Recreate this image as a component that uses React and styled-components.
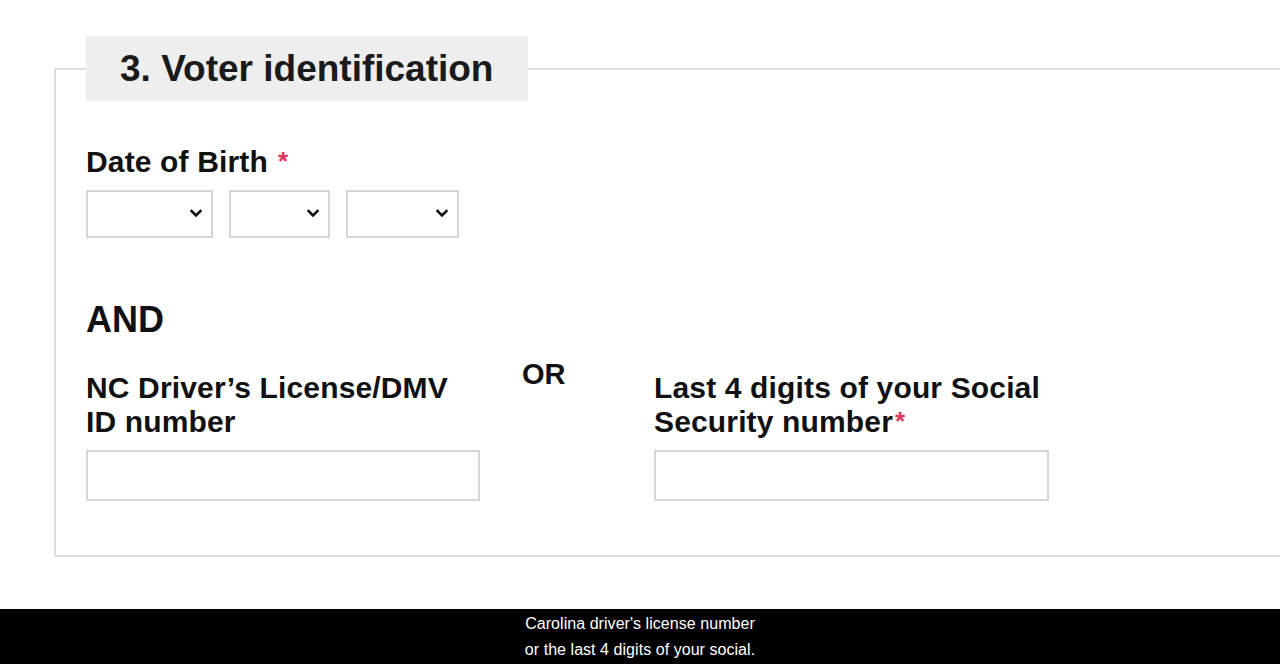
import React from 'react';
import styled, { createGlobalStyle } from 'styled-components';

const GlobalStyle = createGlobalStyle`
  html, body {
    margin: 0;
    padding: 0;
    background: #fff;
    overflow: hidden;
  }
  body {
    font-family: 'Liberation Sans', Arial, sans-serif;
    color: #111;
  }
`

const Page = styled.div`
  display: flex;
  flex-direction: column;
  width: 1280px;
  height: 664px;
  overflow: hidden;
`

const Content = styled.div`
  flex: 1;
  padding: 36px 0 0 54px;
`

const Fieldset = styled.fieldset`
  margin: 0;
  width: 1300px;
  box-sizing: border-box;
  border: 2px solid #dedede;
  border-right: none;
  padding: 44px 0 54px 30px;
  min-width: 0;
`

const Legend = styled.legend`
  box-sizing: border-box;
  height: 65px;
  padding: 0 35px 0 34px;
  background: #eeeeee;
  font-size: 37px;
  font-weight: bold;
  line-height: 65px;
  color: #1a1a1a;
`

const Label = styled.div`
  font-size: 30px;
  font-weight: bold;
  line-height: 34px;
  letter-spacing: 0.15px;
  color: #111;
`

const Req = styled.span`
  position: relative;
  top: -2px;
  line-height: 0;
  color: #e0365e;
  font-size: 26px;
  margin-left: ${p => (p.spaced ? '10px' : '2px')};
`

const SelectRow = styled.div`
  display: flex;
  gap: 16px;
  margin-top: 11px;
`

const SelectWrap = styled.div`
  position: relative;
  width: ${p => p.w}px;
  height: 48px;
`

const Select = styled.select`
  appearance: none;
  -webkit-appearance: none;
  width: 100%;
  height: 100%;
  box-sizing: border-box;
  border: 2px solid #d6d6d6;
  border-radius: 0;
  background: #fff;
  font-family: inherit;
  font-size: 18px;
`

const Chevron = styled.svg`
  position: absolute;
  right: 11px;
  top: 19px;
  pointer-events: none;
`

const AndHeading = styled.div`
  margin-top: 62px;
  font-size: 36px;
  font-weight: bold;
  line-height: 40px;
  color: #111;
`

const IdGrid = styled.div`
  display: grid;
  grid-template-columns: 394px 174px 395px;
  margin-top: 31px;
`

const Column = styled.div`
  display: flex;
  flex-direction: column;
`

const OrText = styled.div`
  padding-left: 42px;
  margin-top: -14px;
  font-size: 29px;
  font-weight: bold;
  line-height: 34px;
  color: #111;
`

const TextInput = styled.input`
  margin-top: 11px;
  height: 51px;
  width: 100%;
  box-sizing: border-box;
  border: 2px solid #d6d6d6;
  background: #fff;
  font-family: inherit;
  font-size: 18px;
  padding: 0 10px;
`

const Caption = styled.div`
  height: 55px;
  background: #000;
  color: #fff;
  text-align: center;
  font-size: 16px;
  line-height: 26px;
  letter-spacing: 0.05px;
  padding-top: 2px;
  box-sizing: border-box;
`

const DateSelect = ({ w }) => (
  <SelectWrap w={w}>
    <Select defaultValue="">
      <option value=""></option>
    </Select>
    <Chevron width="12" height="9" viewBox="0 0 12 9">
      <path d="M1.5 2 L6 6.5 L10.5 2" fill="none" stroke="#111" strokeWidth="2.6" strokeLinecap="square" />
    </Chevron>
  </SelectWrap>
)

const App = () => {
  return (
    <Page>
      <GlobalStyle />
      <Content>
        <Fieldset>
          <Legend>3. Voter identification</Legend>
          <Label>
            Date of Birth<Req spaced>*</Req>
          </Label>
          <SelectRow>
            <DateSelect w={127} />
            <DateSelect w={101} />
            <DateSelect w={113} />
          </SelectRow>
          <AndHeading>AND</AndHeading>
          <IdGrid>
            <Column>
              <Label>
                NC Driver’s License/DMV<br />ID number
              </Label>
              <TextInput type="text" />
            </Column>
            <OrText>OR</OrText>
            <Column>
              <Label>
                Last 4 digits of your Social<br />Security number<Req>*</Req>
              </Label>
              <TextInput type="text" />
            </Column>
          </IdGrid>
        </Fieldset>
      </Content>
      <Caption>
        Carolina driver's license number<br />
        or the last 4 digits of your social.
      </Caption>
    </Page>
  );
};

export default App;
